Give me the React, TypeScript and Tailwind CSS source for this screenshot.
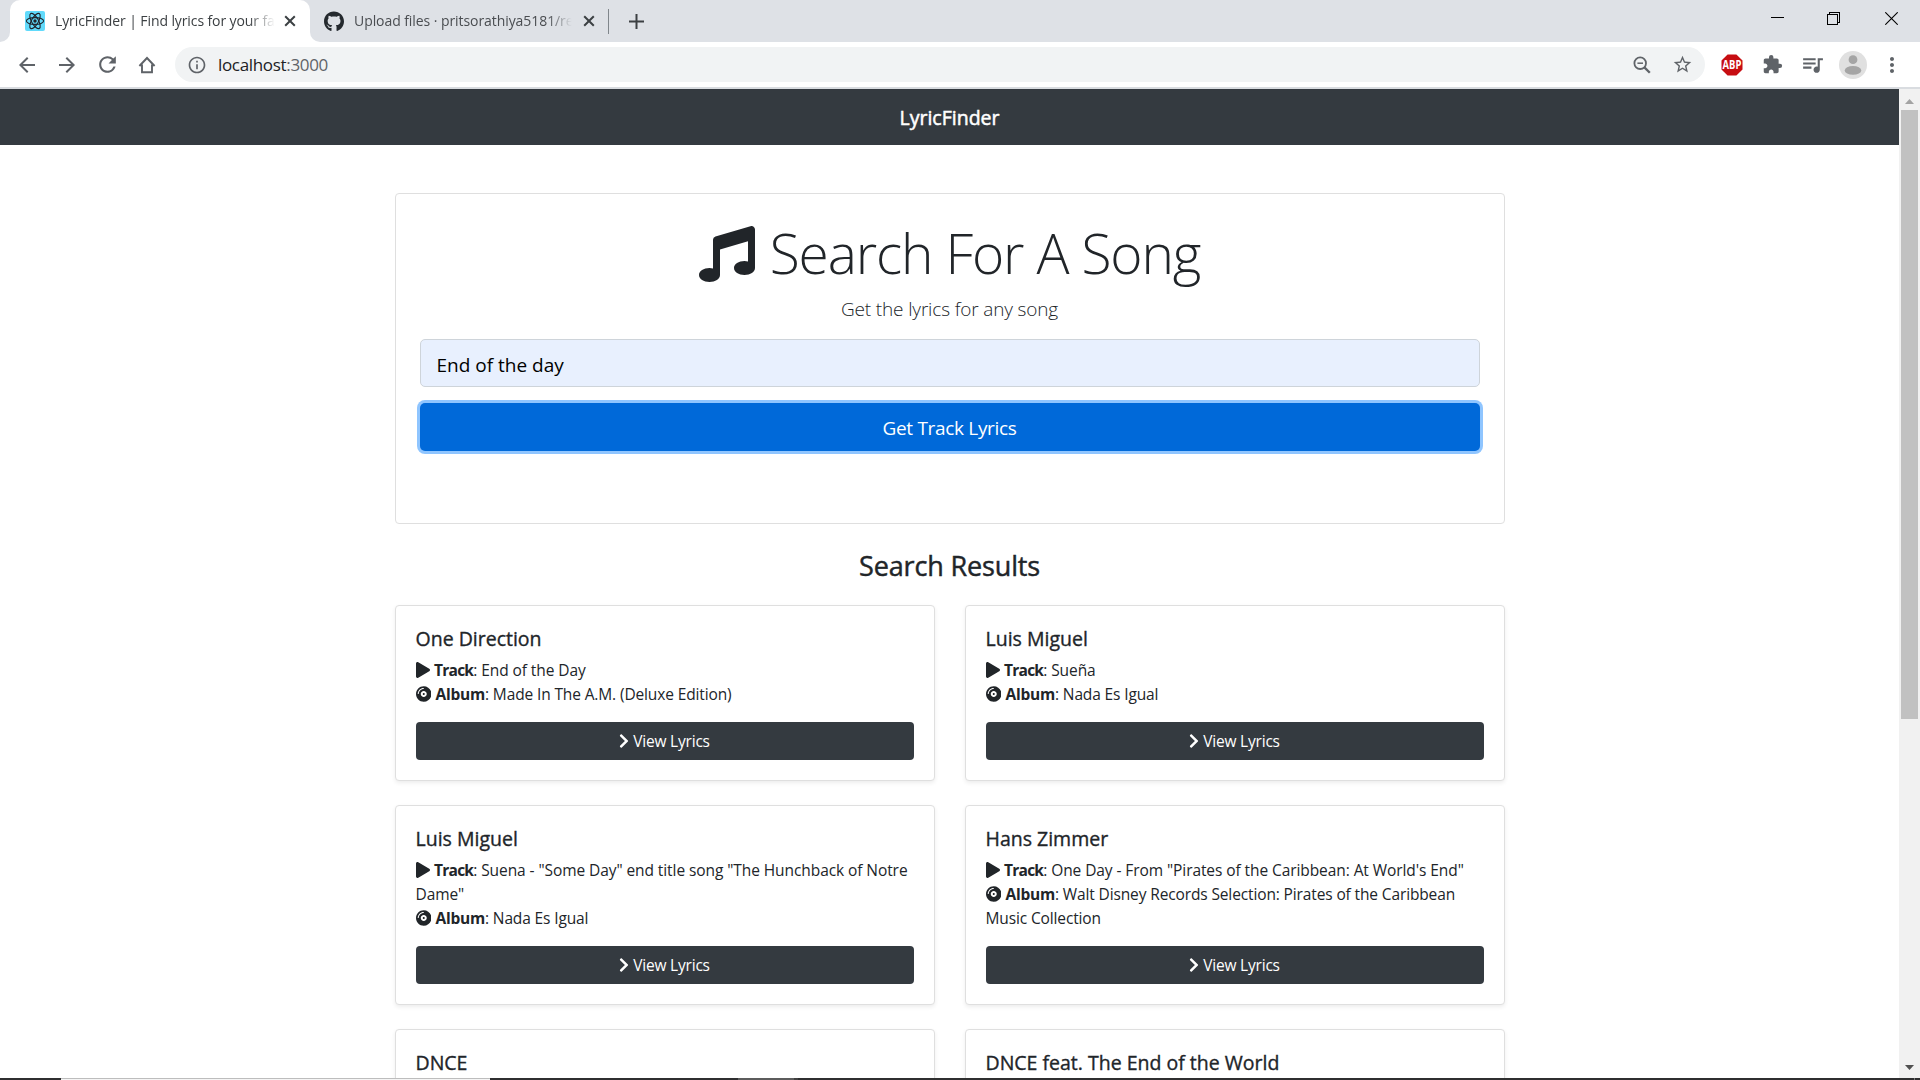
import type { ReactNode } from 'react';
import { FaChevronRight, FaCompactDisc, FaGithub, FaMusic, FaPlay } from 'react-icons/fa';
import {
  MdArrowBack,
  MdArrowForward,
  MdExtension,
  MdInfoOutline,
  MdMoreVert,
  MdQueueMusic,
  MdRefresh,
  MdStarBorder,
} from 'react-icons/md';

type Result = {
  artist: string;
  track: string;
  album: string;
};

const results: Result[] = [
  { artist: 'One Direction', track: 'End of the Day', album: 'Made In The A.M. (Deluxe Edition)' },
  { artist: 'Luis Miguel', track: 'Sueña', album: 'Nada Es Igual' },
  {
    artist: 'Luis Miguel',
    track: 'Suena - "Some Day" end title song "The Hunchback of Notre Dame"',
    album: 'Nada Es Igual',
  },
  {
    artist: 'Hans Zimmer',
    track: 'One Day - From "Pirates of the Caribbean: At World\'s End"',
    album: 'Walt Disney Records Selection: Pirates of the Caribbean Music Collection',
  },
  { artist: 'DNCE', track: '', album: '' },
  { artist: 'DNCE feat. The End of the World', track: '', album: '' },
];

function ReactFavicon() {
  return (
    <svg viewBox="0 0 20 20" className="h-5 w-5 shrink-0">
      <rect width="20" height="20" rx="2" fill="#61dafb" />
      <g fill="none" stroke="#20232a" strokeWidth="1.1">
        <ellipse cx="10" cy="10" rx="8.6" ry="3.4" />
        <ellipse cx="10" cy="10" rx="8.6" ry="3.4" transform="rotate(60 10 10)" />
        <ellipse cx="10" cy="10" rx="8.6" ry="3.4" transform="rotate(120 10 10)" />
      </g>
      <circle cx="10" cy="10" r="1.7" fill="#20232a" />
    </svg>
  );
}

function TabClose() {
  return (
    <svg viewBox="0 0 12 12" className="h-3 w-3 shrink-0" stroke="#3c4043" strokeWidth="2" fill="none">
      <path d="M1.2 1.2 10.8 10.8M10.8 1.2 1.2 10.8" />
    </svg>
  );
}

function TabStrip() {
  return (
    <div className="flex h-[42px] bg-[#dee1e6] text-sm">
      <div className="w-[10px] bg-white">
        <div className="h-full w-full rounded-br-[10px] bg-[#dee1e6]" />
      </div>
      <div className="flex w-[300px] items-center rounded-t-[10px] bg-white pl-[15px]">
        <ReactFavicon />
        <div className="ml-[10px] w-[220px] overflow-hidden whitespace-nowrap tracking-[-0.1px] text-[#3c4043] [mask-image:linear-gradient(to_right,black_88%,transparent_100%)]">
          LyricFinder | Find lyrics for your fa
        </div>
        <div className="ml-[9px] flex">
          <TabClose />
        </div>
      </div>
      <div className="w-[10px] bg-white">
        <div className="h-full w-full rounded-bl-[10px] bg-[#dee1e6]" />
      </div>
      <div className="flex items-center pl-[4px]">
        <FaGithub className="h-[21px] w-5 text-[#24292e]" />
        <div className="ml-[10px] w-[220px] overflow-hidden whitespace-nowrap tracking-[-0.07px] text-[#4a4d51] [mask-image:linear-gradient(to_right,black_88%,transparent_99%)]">
          Upload files · pritsorathiya5181/re
        </div>
        <div className="ml-[9px] flex">
          <TabClose />
        </div>
        <div className="ml-[13px] h-[25px] w-px bg-[#80868b]" />
        <svg viewBox="0 0 15 15" className="ml-[20px] h-[15px] w-[15px]" stroke="#3c4043" strokeWidth="2">
          <path d="M7.5 0V15M0 7.5H15" />
        </svg>
      </div>
      <div className="ml-auto flex items-start pr-[22px]">
        <svg viewBox="0 0 13 13" className="mt-[12px] h-[13px] w-[13px]" stroke="#000" shapeRendering="crispEdges">
          <path d="M0 5.5H13" />
        </svg>
        <svg
          viewBox="0 0 13 13"
          className="mt-[12px] ml-[43px] h-[13px] w-[13px]"
          fill="none"
          stroke="#000"
          shapeRendering="crispEdges"
        >
          <path d="M0.5 2.5H10.5V12.5H0.5ZM2.5 2.5V0.5H12.5V10.5H10.5" />
        </svg>
        <svg viewBox="0 0 13 13" className="mt-[12px] ml-[45px] h-[13px] w-[13px]" fill="none" stroke="#000" strokeWidth="1.1">
          <path d="M0.3 0.3 12.7 12.7M12.7 0.3 0.3 12.7" />
        </svg>
      </div>
    </div>
  );
}

function Toolbar() {
  return (
    <div className="flex h-[47px] items-center border-b-2 border-[#d9dce0] bg-white text-[#5f6368]">
      <div className="flex w-[175px] shrink-0 items-center pl-[15px]">
        <MdArrowBack className="h-[24px] w-[24px]" />
        <MdArrowForward className="ml-[16px] h-[24px] w-[24px]" />
        <MdRefresh className="ml-[16px] h-[25px] w-[25px]" />
        <svg viewBox="0 0 18 18" className="ml-[18px] h-[18px] w-[18px]" fill="none" stroke="currentColor" strokeWidth="1.9">
          <path d="M1.4 10 9 2 16.6 10M4 8.6V16.2H14V8.6" />
        </svg>
      </div>
      <div className="flex h-[35px] w-[1530px] shrink-0 items-center rounded-full bg-[#f1f3f4] pl-[12px]">
        <MdInfoOutline className="h-5 w-5" />
        <div className="ml-[11px] text-[17px] tracking-[-0.33px] text-[#5f6368]">
          <span className="text-[#202124]">localhost</span>:3000
        </div>
        <svg viewBox="0 0 18 18" className="ml-auto h-[18px] w-[18px]" fill="none" stroke="currentColor">
          <circle cx="7.2" cy="7.2" r="5.8" strokeWidth="1.8" />
          <path d="M11.4 11.4 16.8 16.8" strokeWidth="2.3" />
          <path d="M4.4 7.2H10" strokeWidth="1.5" />
        </svg>
        <MdStarBorder className="mr-[12px] ml-[21px] h-[21px] w-[21px]" />
      </div>
      <svg viewBox="0 0 22 22" className="ml-[16px] h-[22px] w-[22px] shrink-0">
        <path d="M6.6 0.5H15.4L21.5 6.6V15.4L15.4 21.5H6.6L0.5 15.4V6.6Z" fill="#c70d12" />
        <text
          x="1.6"
          y="15.3"
          fontSize="12"
          fontWeight="700"
          fill="#fff"
          fontFamily="Open Sans, sans-serif"
          textLength="18.8"
          lengthAdjust="spacingAndGlyphs"
        >
          ABP
        </text>
      </svg>
      <MdExtension className="ml-[19px] h-[21px] w-[21px] shrink-0" />
      <MdQueueMusic className="ml-[17px] h-[25px] w-[25px] shrink-0" />
      <svg viewBox="0 0 28 28" className="ml-[14px] h-7 w-7 shrink-0">
        <circle cx="14" cy="14" r="14" fill="#e0e0e0" />
        <circle cx="14" cy="8.7" r="4.4" fill="#a5a5a5" />
        <ellipse cx="14" cy="19.4" rx="8.3" ry="4.3" fill="#a5a5a5" />
      </svg>
      <MdMoreVert className="ml-[13px] h-[24px] w-[24px] shrink-0" />
    </div>
  );
}

function Meta({ icon, label, children }: { icon: ReactNode; label: string; children: ReactNode }) {
  return (
    <div>
      {icon}
      <strong className={label === 'Track' ? 'font-bold tracking-[-0.75px]' : 'font-bold tracking-[-0.25px]'}>{label}</strong>: {children}
    </div>
  );
}

function ResultCard({ artist, track, album }: Result) {
  return (
    <div className="self-start rounded border border-[#dfdfdf] bg-white p-5 shadow-[0_2px_4px_rgba(0,0,0,0.075)]">
      <h5 className="mb-[7px] pt-px text-[19.5px] leading-6 font-normal [-webkit-text-stroke:0.35px_currentColor]">{artist}</h5>
      {track && (
        <>
          <div className="mb-4 text-[15.5px] leading-6 tracking-[-0.08px]">
            <Meta icon={<FaPlay className="mr-[4.5px] inline h-4 w-[14px] align-[-2px]" />} label="Track">
              {track}
            </Meta>
            <Meta icon={<FaCompactDisc className="mr-[4.5px] inline h-4 w-[15.5px] align-[-2px]" />} label="Album">
              <span className="tracking-[-0.13px]">{album}</span>
            </Meta>
          </div>
          <button className="flex h-[38px] w-full items-center justify-center rounded bg-[#343a40] text-[15.5px] tracking-[-0.2px] text-white">
            <FaChevronRight className="mr-[4px] h-4 w-[10px]" />
            <span className="pt-[2px]">View Lyrics</span>
          </button>
        </>
      )}
      {!track && <div className="h-12" />}
    </div>
  );
}

function Scrollbar() {
  return (
    <div className="flex w-[21px] shrink-0 flex-col items-center bg-[#f1f1f1]">
      <div className="flex h-[21px] items-center pt-[3px]">
        <svg viewBox="0 0 9 5" className="h-[5px] w-[9px]" fill="#a3a3a3">
          <path d="M0 5 4.5 0 9 5Z" />
        </svg>
      </div>
      <div className="h-[609px] w-[17px] bg-[#c1c1c1]" />
      <div className="mt-auto flex h-[21px] items-center">
        <svg viewBox="0 0 9 5" className="h-[5px] w-[9px]" fill="#505050">
          <path d="M0 0 4.5 5 9 0Z" />
        </svg>
      </div>
    </div>
  );
}

function TaskbarEdge() {
  return (
    <div className="flex h-[2px] bg-[#2f2f30]">
      <div className="ml-[61px] w-[429px] border-t border-[#bdbdbd] bg-[#f5f5f5]" />
      <div className="ml-[248px] w-[56px] bg-[#5c5c5c]" />
      <div className="w-[4px] bg-[#404040]" />
      <div className="mr-[5px] ml-auto w-px bg-[#777777]" />
    </div>
  );
}

export default function App() {
  return (
    <div className="flex h-[1080px] w-[1920px] flex-col overflow-hidden bg-white font-['Open_Sans',sans-serif] text-[#212529]">
      <TabStrip />
      <Toolbar />
      <div className="flex min-h-0 flex-1">
        <main className="min-w-0 flex-1 overflow-hidden">
          <nav className="flex h-14 items-center justify-center bg-[#343a40] pt-px text-[19.5px] text-white [-webkit-text-stroke:0.5px_currentColor]">
            LyricFinder
          </nav>
          <div className="mx-auto mt-12 w-[1110px]">
            <section className="h-[331px] rounded border border-[#dfdfdf] p-6">
              <h1 className="mb-2 flex h-[67px] items-center justify-center pt-[4px] text-[55px] font-light tracking-[-1.14px]">
                <FaMusic className="mr-[15px] h-14 w-14" />
                Search For A Song
              </h1>
              <p className="mb-[15px] pt-px text-center text-[19px] leading-[30px] font-light tracking-[-0.15px]">
                Get the lyrics for any song
              </p>
              <div className="mb-4 flex h-12 items-center rounded-[5px] border border-[#ced4da] bg-[#e8f0fe] px-4 pt-[5px] text-[19px] text-black">
                End of the day
              </div>
              <button className="flex h-12 w-full items-center justify-center rounded-[5px] bg-[#0069d9] pt-[3px] text-[19px] tracking-[-0.32px] text-white shadow-[0_0_0_3px_#8fc5ff]">
                Get Track Lyrics
              </button>
            </section>
            <h3 className="mt-6 mb-6 h-[33px] text-center text-[27px] leading-[36px] font-normal tracking-[-0.15px] [-webkit-text-stroke:0.45px_currentColor]">
              Search Results
            </h3>
            <div className="grid grid-cols-2 gap-x-[30px] gap-y-6">
              {results.map((result, index) => (
                <ResultCard key={index} {...result} />
              ))}
            </div>
          </div>
        </main>
        <Scrollbar />
      </div>
      <TaskbarEdge />
    </div>
  );
}
